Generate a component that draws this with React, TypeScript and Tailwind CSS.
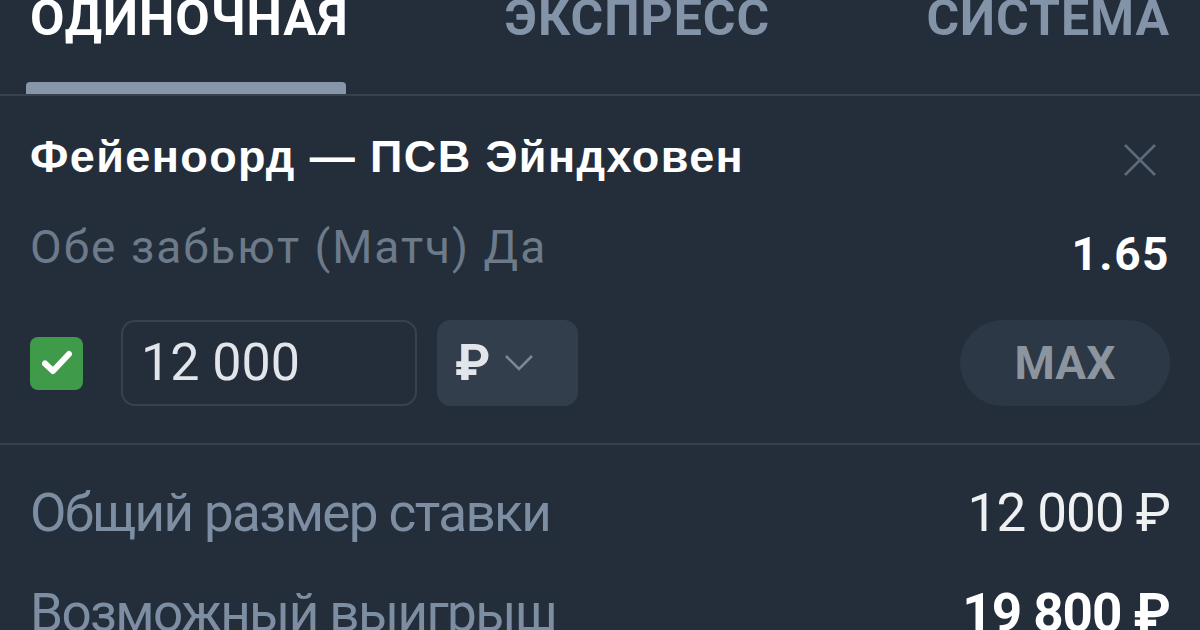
import React, { useState } from 'react';

const tabs = ['ОДИНОЧНАЯ', 'ЭКСПРЕСС', 'СИСТЕМА'];

function CloseIcon() {
  return (
    <svg width="34" height="34" viewBox="0 0 34 34" fill="none">
      <path d="M2 2L32 32M32 2L2 32" stroke="#5f6b7a" strokeWidth="2.5" />
    </svg>
  );
}

function CheckBox({ checked }: { checked: boolean }) {
  return (
    <div className="flex h-[53px] w-[53px] items-center justify-center rounded-[8px] bg-[#3f9a4a]">
      {checked ? (
        <svg width="30" height="26" viewBox="0 0 30 26" fill="none">
          <path d="M3 13.5L11 21L27 4" stroke="#ffffff" strokeWidth="6" strokeLinecap="round" strokeLinejoin="round" />
        </svg>
      ) : null}
    </div>
  );
}

export default function App() {
  const [active, setActive] = useState(0);
  const [checked, setChecked] = useState(true);

  return (
    <div className="h-[630px] w-[1200px] overflow-hidden bg-[#242e3b] font-['Roboto',sans-serif]">
      {/* tabs */}
      <div className="relative flex h-[96px] items-start justify-between border-b-2 border-[#38424f] px-[30px]">
        {tabs.map((t, i) => (
          <button
            key={t}
            onClick={() => setActive(i)}
            className={`mt-[-7px] text-[50px] leading-[50px] font-bold tracking-[1px] ${i === active ? 'text-white' : 'text-[#8393a8]'}`}
          >
            {t}
          </button>
        ))}
        <div className="absolute bottom-0 left-[26px] h-[12px] w-[320px] rounded-t-[4px] bg-[#8796a8]" />
      </div>

      {/* bet item */}
      <div className="border-b-2 border-[#38424f] px-[30px] pt-[36px] pb-[37px]">
        <div className="flex items-center justify-between">
          <span className="font-['Liberation_Sans',sans-serif] text-[45px] leading-[50px] font-bold tracking-[1.4px] text-white">
            Фейеноорд — ПСВ Эйндховен
          </span>
          <span className="mt-[6px] mr-[13px]"><CloseIcon /></span>
        </div>
        <div className="mt-[40px] flex items-start justify-between">
          <span className="text-[46px] leading-[50px] tracking-[2px] text-[#6d7a8a]">Обе забьют (Матч) Да</span>
          <span className="mt-[7px] text-[46px] leading-[50px] font-bold tracking-[1.5px] text-white">1.65</span>
        </div>
        <div className="mt-[41px] flex items-center">
          <button onClick={() => setChecked(!checked)}>
            <CheckBox checked={checked} />
          </button>
          <div className="ml-[38px] flex h-[86px] w-[296px] items-center rounded-[14px] border-2 border-[#38424f] px-[18px] text-[52px] text-[#e2e5e9]">
            12 000
          </div>
          <div className="ml-[20px] flex h-[86px] w-[141px] items-center gap-[14px] rounded-[14px] bg-[#333e4c] px-[18px] text-[50px] font-bold text-[#e2e5e9]">
            ₽
            <svg width="30" height="18" viewBox="0 0 30 18" fill="none">
              <path d="M2 2L15 15L28 2" stroke="#7a8899" strokeWidth="2.5" />
            </svg>
          </div>
          <button className="ml-auto flex h-[86px] w-[210px] items-center justify-center rounded-full bg-[#2d3846] text-[46px] font-bold text-[#8c949e]">
            MAX
          </button>
        </div>
      </div>

      {/* totals */}
      <div className="px-[30px] pt-[38px]">
        <div className="flex items-center justify-between">
          <span className="text-[53px] leading-[60px] tracking-[-1.6px] text-[#7d8ea2]">Общий размер ставки</span>
          <span className="text-[53px] leading-[60px] tracking-[-1px] text-[#eef0f2]">12 000 ₽</span>
        </div>
        <div className="mt-[40px] flex items-center justify-between">
          <span className="text-[53px] leading-[60px] tracking-[-1.6px] text-[#7d8ea2]">Возможный выигрыш</span>
          <span className="text-[53px] leading-[60px] font-bold tracking-[-1px] text-white">19 800 ₽</span>
        </div>
      </div>
    </div>
  );
}
